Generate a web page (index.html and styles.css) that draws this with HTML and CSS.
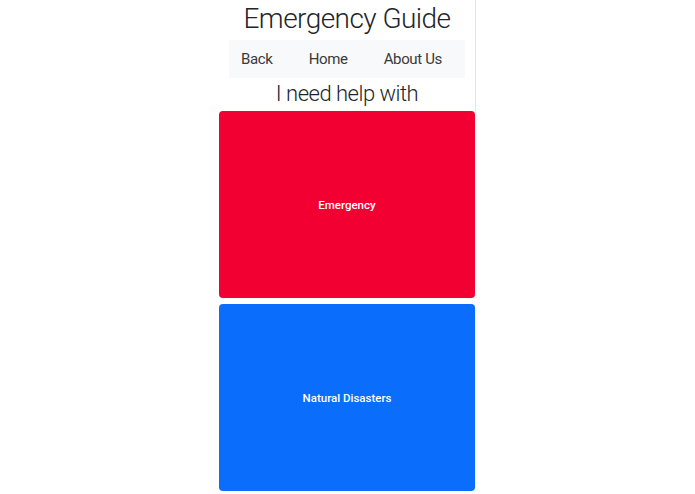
FILE: index.html
```html
<html>

<head>
    <title>Emergency Guide</title>
    <link rel="stylesheet" href="styles.css">
</head>

<body>
    <div id="guide">
        <div id="guide-header">
            <h1>Emergency Guide</h1>
            <nav class="guide-nav">
                <a href="#">Back</a>
                <a href="#">Home</a>
                <a href="#">About Us</a>
            </nav>
            <h2>I need help with</h2>
        </div>
        <a class="help-card help-emergency" href="#">Emergency</a>
        <a class="help-card help-disasters" href="#">Natural Disasters</a>
    </div>
</body>

</html>
```

FILE: styles.css
```css
body {
    margin: 0;
    font-family: Roboto, 'Liberation Sans', sans-serif;
    background: #ffffff;
    color: #212529;
}

#guide {
    width: 257px;
    margin: 0 auto;
}

#guide-header {
    border-right: 1px solid #e4e4e4;
    height: 111px;
    text-align: center;
}

#guide-header h1 {
    margin: 0;
    height: 40px;
    font-size: 28px;
    font-weight: 300;
    line-height: 37px;
    letter-spacing: -0.55px;
}

.guide-nav {
    display: flex;
    align-items: center;
    justify-content: space-between;
    height: 38px;
    margin: 0 10px;
    padding: 0 23px 0 12px;
    background: #f8f9fa;
}

.guide-nav a {
    color: #3a3a3a;
    text-decoration: none;
    font-size: 15px;
    letter-spacing: -0.35px;
}

#guide-header h2 {
    margin: 0;
    font-size: 22px;
    font-weight: 300;
    line-height: 31px;
    letter-spacing: -0.5px;
}

.help-card {
    display: flex;
    align-items: center;
    justify-content: center;
    width: 256px;
    height: 187px;
    margin-bottom: 6px;
    border-radius: 4px;
    color: #ffffff;
    font-size: 11.5px;
    font-weight: 500;
    text-decoration: none;
}

.help-emergency {
    background: #f20031;
}

.help-disasters {
    background: #0a6dfb;
}
```
